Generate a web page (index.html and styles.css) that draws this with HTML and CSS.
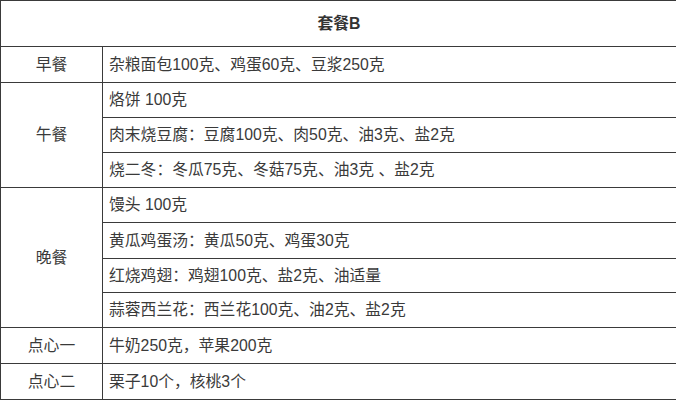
FILE: index.html
```html
<!DOCTYPE html>
<html lang="zh">
<head>
<meta charset="utf-8">
<link rel="stylesheet" href="styles.css">
</head>
<body>
<table class="menu">
  <colgroup><col class="c1"><col class="c2"></colgroup>
  <tr class="head"><th colspan="2">套餐B</th></tr>
  <tr class="r36"><td class="meal">早餐</td><td>杂粮面包100克、鸡蛋60克、豆浆250克</td></tr>
  <tr><td class="meal" rowspan="3">午餐</td><td>烙饼 100克</td></tr>
  <tr><td>肉末烧豆腐：豆腐100克、肉50克、油3克、盐2克</td></tr>
  <tr><td>烧二冬：冬瓜75克、冬菇75克、油3克 、盐2克</td></tr>
  <tr><td class="meal" rowspan="4">晚餐</td><td>馒头 100克</td></tr>
  <tr class="r36"><td>黄瓜鸡蛋汤：黄瓜50克、鸡蛋30克</td></tr>
  <tr class="r34"><td>红烧鸡翅：鸡翅100克、盐2克、油适量</td></tr>
  <tr><td>蒜蓉西兰花：西兰花100克、油2克、盐2克</td></tr>
  <tr class="r36"><td class="meal">点心一</td><td>牛奶250克，苹果200克</td></tr>
  <tr class="r36"><td class="meal">点心二</td><td>栗子10个，核桃3个</td></tr>
</table>
</body>
</html>
```
FILE: styles.css
```css
html, body {
  margin: 0;
  padding: 0;
  background: #fff;
  overflow: hidden;
}
.menu {
  border-collapse: collapse;
  width: 678px;
  table-layout: fixed;
  font-family: "Liberation Sans", "Noto Sans CJK SC", sans-serif;
  font-size: 15.8px;
  color: #3a3a3a;
}
.c1 { width: 102px; }
.menu th, .menu td {
  border: 1px solid #3a3a3a;
  padding: 0 6px;
  height: 34px;
  text-align: left;
  vertical-align: middle;
  white-space: nowrap;
  line-height: 20px;
}
.menu tr.r36 td { height: 35px; }
.menu tr.r34 td { height: 33px; }
.menu .head th {
  height: 45px;
  text-align: center;
  font-weight: bold;
  color: #333;
}
.menu td.meal {
  text-align: center;
}
```
